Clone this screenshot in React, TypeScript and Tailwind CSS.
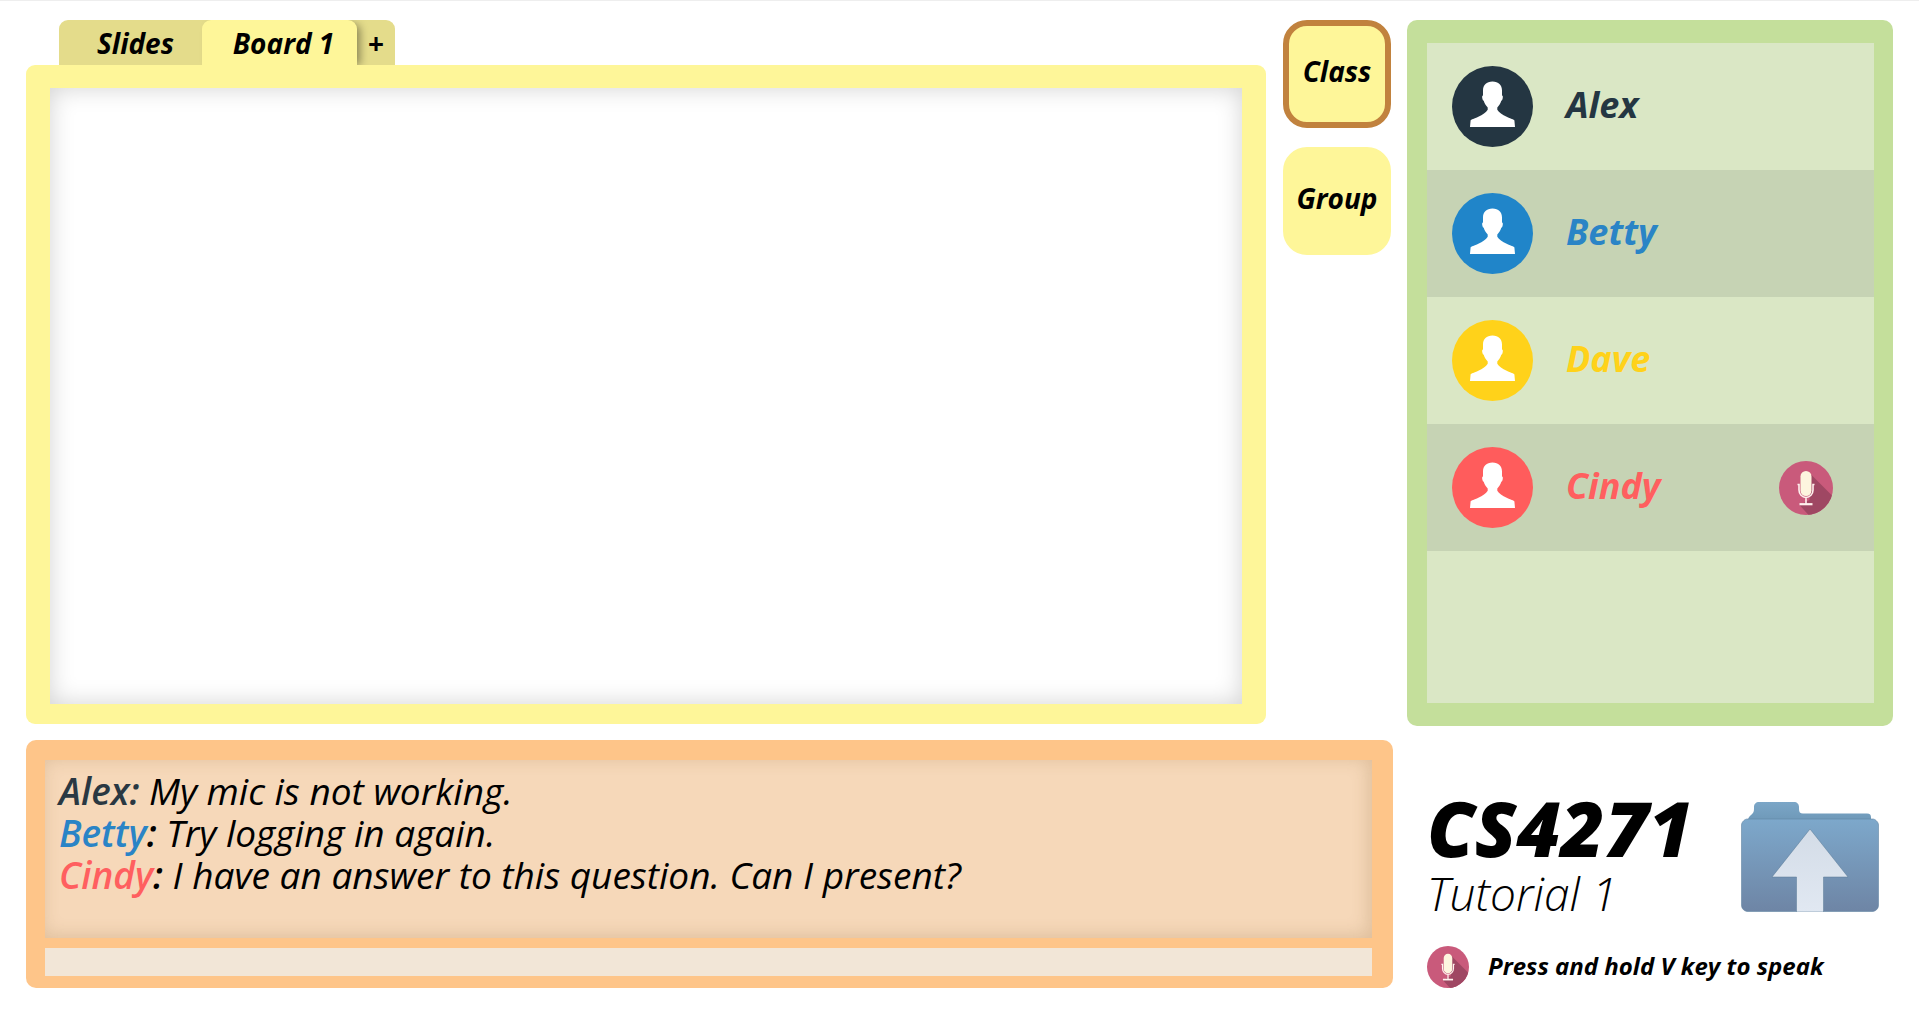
import React, { useState } from 'react';

type Member = {
  name: string;
  avatar: string;
  text: string;
  speaking?: boolean;
};

const members: Member[] = [
  { name: 'Alex', avatar: 'text-[#243642]', text: 'text-[#243642]' },
  { name: 'Betty', avatar: 'text-[#2085c9]', text: 'text-[#2a84c6]' },
  { name: 'Dave', avatar: 'text-[#ffd21a]', text: 'text-[#ffd21a]' },
  { name: 'Cindy', avatar: 'text-[#ff5c5c]', text: 'text-[#ff5f5f]', speaking: true },
];

const messages = [
  { from: 'Alex', color: 'text-[#2a3842]', colon: 'text-[#2a3842]', body: 'My mic is not working.' },
  { from: 'Betty', color: 'text-[#2a84c6]', colon: 'text-black', body: 'Try logging in again.' },
  { from: 'Cindy', color: 'text-[#ff5f5f]', colon: 'text-black', body: 'I have an answer to this question. Can I present?' },
];

function Avatar({ className }: { className: string }) {
  return (
    <svg viewBox="0 0 81 81" className={`size-[81px] shrink-0 ${className}`} aria-hidden="true">
      <circle cx="40.5" cy="40.5" r="40.5" fill="currentColor" />
      <path
        fill="#fff"
        d="M40.5 15.5c-6 0-9.5 3.6-9.5 9v5c-1 .2-1 1.500-.6 3.200.3 1.200.7 1.900 1.300 2.100.8 2.800 2.300 4.800 4 6.700v2.200c-1.700 2.600-5 4.800-9.400 7.100C22.500 52.800 19 53.500 18.600 54.500L18 61h45l-.6-6.500c-.4-1-3.900-1.700-7.700-3.700-4.400-2.300-7.700-4.500-9.400-7.100v-2.200c1.700-1.900 3.200-3.900 4-6.700.6-.2 1-.9 1.300-2.100.4-1.700.4-3-.6-3.200v-5c0-5.400-3.500-9-9.500-9z"
      />
    </svg>
  );
}

function Mic({ className, id }: { className: string; id: string }) {
  return (
    <svg viewBox="0 0 54 54" className={`shrink-0 ${className}`} aria-hidden="true">
      <clipPath id={id}>
        <circle cx="27" cy="27" r="27" />
      </clipPath>
      <circle cx="27" cy="27" r="27" fill="#c95a7b" />
      <path clipPath={`url(#${id})`} fill="#9f4763" d="M31.500 13 60 41.500V60H35L20.500 44l10-5z" />
      <rect x="21.500" y="10" width="11" height="25" rx="5.500" fill="#fdf5df" />
      <path
        d="M18.500 23.500h1.500v5.500a7 7.500 0 0 0 14 0v-5.500h1.500M27 36.500v6.500"
        fill="none"
        stroke="#fff1ee"
        strokeWidth="1.600"
      />
      <path d="M20.500 43.200h13" fill="none" stroke="#fff1ee" strokeWidth="2.200" />
    </svg>
  );
}

function UploadFolder() {
  return (
    <svg viewBox="0 0 138 110" className="h-[110px] w-[138px]" aria-hidden="true">
      <defs>
        <linearGradient id="folder-back" x1="0" y1="0" x2="0" y2="1">
          <stop offset="0" stopColor="#7ba6c7" />
          <stop offset="0.600" stopColor="#6b95b4" />
        </linearGradient>
        <linearGradient id="folder-front" x1="0" y1="0" x2="0" y2="1">
          <stop offset="0" stopColor="#7da8cb" />
          <stop offset="1" stopColor="#6e85a5" />
        </linearGradient>
        <linearGradient id="folder-arrow" x1="0" y1="0" x2="0" y2="1">
          <stop offset="0" stopColor="#d3dce7" />
          <stop offset="1" stopColor="#e1e8f2" />
        </linearGradient>
      </defs>
      <path
        fill="url(#folder-back)"
        d="M7 18c0-2 1-3 3-5s3-3 3-6V5c0-3 2-5 5-5h35c3 0 5 2 5 5v2c0 3 1 4.500 4 4.500h64c3 0 4 1.500 4 4V40H7z"
      />
      <path
        fill="url(#folder-front)"
        stroke="#6285a3"
        strokeOpacity="0.600"
        d="M6 17h126c2 0 5.500 3 5.500 6v80c0 4-3 6.500-6.500 6.500H7c-3.500 0-6.500-2.500-6.500-6.500V23c0-3 3.500-6 5.500-6z"
      />
      <path fill="url(#folder-arrow)" stroke="#587995" strokeOpacity="0.500" d="M69 27 107 75H82.500v35h-27V75H31z" />
    </svg>
  );
}

export default function App() {
  const [tab, setTab] = useState('Board 1');
  const [room, setRoom] = useState('Class');
  const [draft, setDraft] = useState('');

  return (
    <div className="grid min-h-screen grid-cols-[minmax(0,1fr)_486px] gap-x-3.5 border-t border-[#eeeeee] bg-white px-[26px] pt-[19px] pb-[27px] font-['Open_Sans',sans-serif] text-black italic">
      <main className="flex min-w-0 flex-col gap-4">
        <div className="flex flex-1 gap-[17px]">
          <section className="flex min-w-0 flex-1 flex-col">
            <div role="tablist" className="ml-[33px] flex h-[45px] self-start overflow-hidden rounded-t-[9px] bg-[#e4dc8b] text-[28px] leading-[44px] font-bold">
              <button
                role="tab"
                aria-selected={tab === 'Slides'}
                onClick={() => setTab('Slides')}
                className="w-[143px] pl-2.5"
              >
                Slides
              </button>
              <button
                role="tab"
                aria-selected={tab === 'Board 1'}
                onClick={() => setTab('Board 1')}
                className="w-[155px] rounded-t-[9px] bg-[#fef699] pl-2 shadow-[5px_2px_8px_-2px_rgba(0,0,0,0.4)]"
              >
                Board 1
              </button>
              <button aria-label="Add board" className="w-[38px] not-italic">
                +
              </button>
            </div>
            <div className="flex flex-1 rounded-[9px] bg-[#fef699] px-6 pt-[23px] pb-5">
              <div role="tabpanel" aria-label={tab} className="flex-1 bg-white shadow-[inset_0_0_24px_rgba(0,0,0,0.18)]" />
            </div>
          </section>

          <nav aria-label="Rooms" className="flex w-[110px] flex-col gap-[19px] text-[28px] font-bold">
            {['Class', 'Group'].map((label) => (
              <button
                key={label}
                aria-pressed={room === label}
                onClick={() => setRoom(label)}
                className={`size-[108px] rounded-[24px] border-6 bg-[#fef699] pb-1.5 ${
                  room === label ? 'border-[#c1823e]' : 'border-[#fef699]'
                }`}
              >
                {label}
              </button>
            ))}
          </nav>
        </div>

        <section aria-label="Chat" className="flex flex-col gap-2.5 rounded-[10px] bg-[#fec589] pt-5 pr-[21px] pb-3 pl-[19px]">
          <div className="min-h-[178px] bg-[#f6d8b9] px-3.5 pt-2.5 text-[37px] leading-[42px] shadow-[inset_-3px_-2px_18px_rgba(120,80,30,0.2)]">
            {messages.map((m) => (
              <p key={m.from}>
                <b className={`font-semibold ${m.color}`}>{m.from}</b>
                <b className={`font-semibold ${m.colon}`}>:</b> {m.body}
              </p>
            ))}
          </div>
          <input
            aria-label="Message"
            value={draft}
            onChange={(e) => setDraft(e.target.value)}
            className="h-7 w-full bg-[#f2e6d7] px-3.5 text-lg outline-none"
          />
        </section>
      </main>

      <aside className="flex flex-col">
        <section aria-label="Members" className="flex flex-1 flex-col rounded-[10px] bg-[#c4df9b] py-[23px] pr-[19px] pl-5">
          <ul className="flex-1 bg-[#dae7c5]">
            {members.map((m) => (
              <li key={m.name} className="flex h-[127px] items-center pr-[41px] pl-[25px] even:bg-[#c6d3b4]">
                <Avatar className={m.avatar} />
                <span className={`ml-[33px] flex-1 pb-1 text-[36px] leading-[48px] font-bold ${m.text}`}>{m.name}</span>
                {m.speaking && <Mic id="mic-member" className="size-[54px]" />}
              </li>
            ))}
          </ul>
        </section>

        <footer className="pt-[62px] pl-5">
          <div className="flex items-start justify-between pr-3.5">
            <div>
              <h1 className="text-[76px] leading-[80px] font-extrabold">CS4271</h1>
              <p className="text-[46px] leading-[50px] font-light">Tutorial 1</p>
            </div>
            <button aria-label="Upload files" className="mt-3.5">
              <UploadFolder />
            </button>
          </div>
          <div className="mt-7 flex items-center gap-[19px]">
            <Mic id="mic-hint" className="size-[42px]" />
            <p className="pb-0.5 text-2xl font-bold">Press and hold V key to speak</p>
          </div>
        </footer>
      </aside>
    </div>
  );
}
